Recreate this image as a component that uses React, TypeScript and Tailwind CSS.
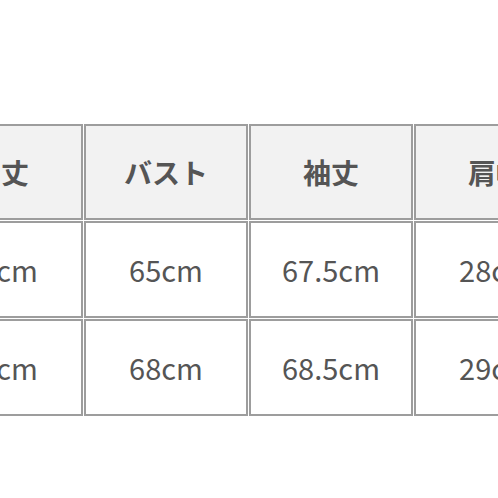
import React from "react";

const headers = ["着丈", "バスト", "袖丈", "肩幅"];
const rows = [
  ["66cm", "65cm", "67.5cm", "28cm"],
  ["68cm", "68cm", "68.5cm", "29cm"],
];

export default function App() {
  return (
    <div
      className="w-[498px] h-[498px] overflow-hidden bg-white"
      style={{ fontFamily: '"Noto Sans CJK JP", "Noto Sans", sans-serif' }}
    >
      <div className="pt-[123px] ml-[-82px]">
        <table className="border-separate border-spacing-[1px] table-fixed">
          <thead>
            <tr>
              {headers.map((h) => (
                <th
                  key={h}
                  className="w-[164px] min-w-[164px] h-[96px] border-2 border-[#9d9d9d] bg-[#f2f2f2] text-[28px] font-bold text-[#555555] text-center align-middle p-0 whitespace-nowrap"
                >
                  {h}
                </th>
              ))}
            </tr>
          </thead>
          <tbody>
            {rows.map((r, i) => (
              <tr key={i}>
                {r.map((c, j) => (
                  <td
                    key={j}
                    className="w-[164px] min-w-[164px] h-[97px] border-2 border-[#9d9d9d] bg-white text-[29px] font-normal text-[#555555] text-center align-middle p-0 whitespace-nowrap"
                  >
                    {c}
                  </td>
                ))}
              </tr>
            ))}
          </tbody>
        </table>
      </div>
    </div>
  );
}
